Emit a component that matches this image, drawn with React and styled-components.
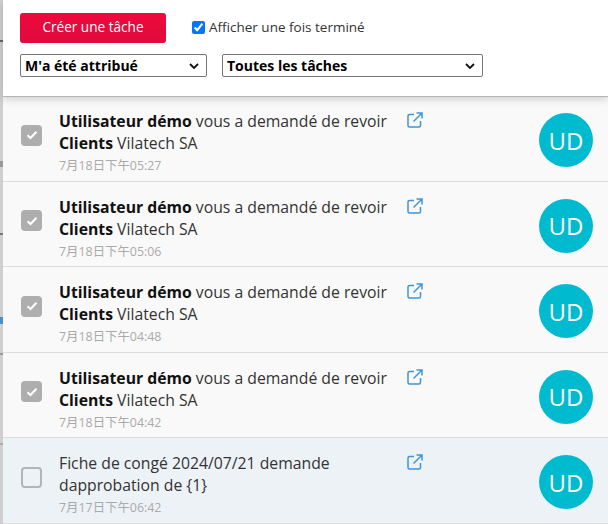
import React from "react";
import styled, { createGlobalStyle } from "styled-components";

const Global = createGlobalStyle`
  html, body { margin: 0; padding: 0; background: #fff; height: 524px; overflow: hidden; }
  * { box-sizing: border-box; }
  body { font-family: "Open Sans", "Noto Sans CJK SC", sans-serif; }
`;

const chevron = encodeURIComponent(
  '<svg xmlns="http://www.w3.org/2000/svg" width="10" height="6" viewBox="0 0 10 6"><path d="M1 1l4 4 4-4" fill="none" stroke="#111" stroke-width="1.8"/></svg>'
);

// the page behind the panel only shows as a thin strip with a few cut-off marks
const Page = styled.div`
  width: 608px;
  height: 524px;
  overflow: hidden;
  padding-left: 3px;
  background: linear-gradient(
    #cfcfcf 0 40px, #666 40px 42px, #cfcfcf 42px 161px, #999 161px 167px,
    #cfcfcf 167px 233px, #777 233px 235px, #cfcfcf 235px 317px, #4a90c8 317px 324px,
    #cfcfcf 324px 353px, #999 353px 355px, #cfcfcf 355px 443px, #aaa 443px 445px, #cfcfcf 445px
  );
`;

const Panel = styled.div`
  background: #fff;
  height: 524px;
`;

const Header = styled.div`
  height: 96px;
  padding: 13px 0 0 17px;
  position: relative;
  z-index: 1;
  background: #fff;
  box-shadow: 0 1px 0 #b5b5b5, 0 3px 8px rgba(0, 0, 0, 0.18);
`;

const TopRow = styled.div`
  display: flex;
  align-items: center;
`;

const CreateBtn = styled.button`
  width: 146px;
  height: 30px;
  border: none;
  border-radius: 3px;
  background: linear-gradient(#ee0a3c, #e00a3c);
  color: #fff;
  font: 400 13.6px "Open Sans", sans-serif;
  padding: 0 0 3px;
`;

const Toggle = styled.label`
  display: flex;
  align-items: center;
  margin: -2px 0 0 26px;
  font-size: 13.5px;
  color: #333;
`;

const ToggleBox = styled.input`
  width: 13px;
  height: 13px;
  margin: 0 4px 0 0;
`;

const Filters = styled.div`
  display: flex;
  gap: 15px;
  margin-top: 11px;
`;

const Select = styled.select`
  width: ${(p) => p.$w}px;
  height: 23px;
  font: 700 14px "Open Sans", sans-serif;
  color: #000;
  appearance: none;
  background: #fff url("data:image/svg+xml,${chevron}") no-repeat right 7px center;
  border: 1px solid #767676;
  border-radius: 2px;
  padding: 0 0 0 4px;
`;

const Row = styled.div`
  height: 85.5px;
  display: flex;
  border-bottom: 1px solid #dcdcdc;
  background: ${(p) => (p.$unread ? "#edf2f7" : "#f9f9f9")};
  padding: 14px 0 0 18px;
`;

const CheckSlot = styled.div`
  width: 38px;
  padding-top: 14.5px;
  flex: none;
`;

const Check = styled.div`
  width: 21px;
  height: 21px;
  border-radius: 4px;
  display: flex;
  align-items: center;
  justify-content: center;
  background: ${(p) => (p.$on ? "#aeaeae" : "transparent")};
  border: ${(p) => (p.$on ? "none" : "2px solid #b4b4b4")};
`;

const Body = styled.div`
  width: 346px;
  flex: none;
  font-size: 15.75px;
  line-height: 22px;
  color: #333;
`;

const Name = styled.b`
  color: #111;
`;

const Stamp = styled.div`
  font-size: 12.4px;
  line-height: 20px;
  margin-top: 2px;
  color: #aaa;
`;

const LinkIcon = styled.svg`
  width: 16px;
  height: 16px;
  margin: 2px 0 0 2px;
  flex: none;
`;

const Avatar = styled.div`
  width: 54px;
  height: 54px;
  border-radius: 50%;
  background: #00bacf;
  color: #fff;
  font-size: 24px;
  display: flex;
  align-items: center;
  justify-content: center;
  margin: 3px 0 0 116px;
  flex: none;
`;

const tasks = [
  { time: "7月18日下午05:27" },
  { time: "7月18日下午05:06" },
  { time: "7月18日下午04:48" },
  { time: "7月18日下午04:42" },
  { time: "7月17日下午06:42", unread: true },
];

export default function App() {
  return (
    <Page>
      <Global />
      <Panel>
        <Header>
          <TopRow>
            <CreateBtn>Créer une tâche</CreateBtn>
            <Toggle>
              <ToggleBox type="checkbox" defaultChecked />
              Afficher une fois terminé
            </Toggle>
          </TopRow>
          <Filters>
            <Select $w={187}>
              <option>M'a été attribué</option>
            </Select>
            <Select $w={261}>
              <option>Toutes les tâches</option>
            </Select>
          </Filters>
        </Header>
        {tasks.map((t) => (
          <Row key={t.time} $unread={t.unread}>
            <CheckSlot>
              <Check $on={!t.unread}>
                {!t.unread && (
                  <svg width="12" height="10" viewBox="0 0 12 10">
                    <path d="M1.5 5.2 4.5 8 10.5 1.8" fill="none" stroke="#fff" strokeWidth="2" />
                  </svg>
                )}
              </Check>
            </CheckSlot>
            <Body>
              {t.unread ? (
                <div>Fiche de congé 2024/07/21 demande dapprobation de {"{1}"}</div>
              ) : (
                <div>
                  <Name>Utilisateur démo</Name> vous a demandé de revoir <Name>Clients</Name> Vilatech SA
                </div>
              )}
              <Stamp>{t.time}</Stamp>
            </Body>
            <LinkIcon viewBox="0 0 16 16" fill="none" stroke="#3f94de" strokeWidth="1.5">
              <path d="M7 2.5H2.5a1.5 1.5 0 0 0-1.5 1.5v9.5a1.5 1.5 0 0 0 1.5 1.5H12a1.5 1.5 0 0 0 1.5-1.5V9" />
              <path d="M6.5 9.5 14.5 1.5M9.5 1h5.5v5.5" />
            </LinkIcon>
            <Avatar>UD</Avatar>
          </Row>
        ))}
      </Panel>
    </Page>
  );
}
